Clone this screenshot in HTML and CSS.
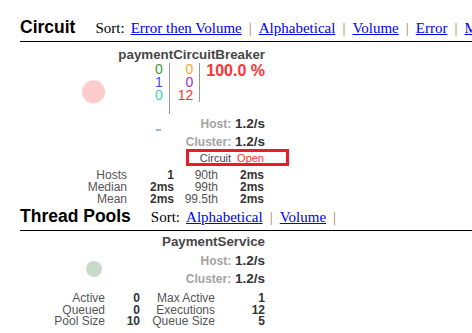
FILE: index.html
```html
<html lang="en">
<head>
    <title>Hystrix Stream: payment</title>
    <link rel="stylesheet" href="styles.css">
</head>
<body>
<div class="section">
    <div class="section-header">
        <h2>Circuit</h2>
        <div class="sort">
            <span>Sort:</span>
            <a href="#">Error then Volume</a><span class="sep">|</span>
            <a href="#">Alphabetical</a><span class="sep">|</span>
            <a href="#">Volume</a><span class="sep">|</span>
            <a href="#">Error</a><span class="sep">|</span>
            <a href="#">Mean</a><span class="sep">|</span>
            <a href="#">Median</a><span class="sep">|</span>
            <a href="#">90</a><span class="sep">|</span>
            <a href="#">99</a><span class="sep">|</span>
            <a href="#">99.5</a>
        </div>
    </div>
    <div class="monitor">
        <!-- health circle and sparkline drawn on the chart canvas -->
        <svg class="chart" width="245" height="160">
            <circle cx="73.5" cy="49.8" r="11.5" fill="#ffcccc"/>
            <rect x="136" y="87" width="5" height="2" fill="#9db7d6"/>
        </svg>
        <p class="name">paymentCircuitBreaker</p>
        <div class="counters">
            <div class="counter-col first">
                <span class="success">0</span>
                <span class="short-circuited">1</span>
                <span class="bad-request">0</span>
            </div>
            <div class="counter-col">
                <span class="timeout">0</span>
                <span class="rejected">0</span>
                <span class="failure">12</span>
            </div>
            <div class="error-rate">100.0 %</div>
        </div>
        <div class="rates">
            <div class="rate"><span class="rate-label">Host:</span> <span>1.2/s</span></div>
            <div class="rate"><span class="rate-label">Cluster:</span> <span>1.2/s</span></div>
        </div>
        <div class="status">
            Circuit <span class="open">Open</span>
            <span class="highlight"></span>
        </div>
        <div class="stats latency">
            <span class="label">Hosts</span><span class="value">1</span>
            <span class="label">90th</span><span class="value">2ms</span>
            <span class="label">Median</span><span class="value">2ms</span>
            <span class="label">99th</span><span class="value">2ms</span>
            <span class="label">Mean</span><span class="value">2ms</span>
            <span class="label">99.5th</span><span class="value">2ms</span>
        </div>
    </div>
</div>
<div class="section">
    <div class="section-header">
        <h2>Thread Pools</h2>
        <div class="sort">
            <span>Sort:</span>
            <a href="#">Alphabetical</a><span class="sep">|</span>
            <a href="#">Volume</a><span class="sep">|</span>
        </div>
    </div>
    <div class="monitor pool-monitor">
        <svg class="chart" width="245" height="80">
            <circle cx="74" cy="38" r="8" fill="#c8dbc9"/>
        </svg>
        <p class="name">PaymentService</p>
        <div class="rates pool-rates">
            <div class="rate"><span class="rate-label">Host:</span> <span>1.2/s</span></div>
            <div class="rate"><span class="rate-label">Cluster:</span> <span>1.2/s</span></div>
        </div>
        <div class="stats pool">
            <span class="label">Active</span><span class="value">0</span>
            <span class="label">Max Active</span><span class="value">1</span>
            <span class="label">Queued</span><span class="value">0</span>
            <span class="label">Executions</span><span class="value">12</span>
            <span class="label">Pool Size</span><span class="value">10</span>
            <span class="label">Queue Size</span><span class="value">5</span>
        </div>
    </div>
</div>
</body>
</html>
```

FILE: styles.css
```css
body {
    margin: 0;
    padding-left: 20px;
    overflow: hidden;
    font-family: "Liberation Sans", Arial, sans-serif;
    background-color: #fff;
    color: #333;
}

.section-header {
    display: flex;
    align-items: baseline;
    padding-bottom: 2px;
    border-bottom: 1px solid #000;
    white-space: nowrap;
}

.section:first-child .section-header {
    margin-top: 16px;
}

.section-header h2 {
    margin: 0 20px 0 0;
    font-size: 17.5px;
    line-height: 22px;
    font-weight: bold;
    color: #000;
}

.sort {
    display: flex;
    gap: 6px;
    font-family: "Liberation Serif", "Times New Roman", serif;
    font-size: 15px;
    line-height: 22px;
    color: #000;
}

.sort a {
    color: #0000ee;
}

.sort .sep {
    color: #a57a45;
    margin: 0 1px;
}

.monitor {
    position: relative;
    width: 245px;
    padding-top: 5px;
}

.pool-monitor {
    padding-top: 3px;
}

.chart {
    position: absolute;
    left: 0;
    top: 0;
}

.name {
    margin: 0;
    text-align: right;
    font-size: 10pt;
    line-height: 16px;
    font-weight: bold;
    color: #474747;
}

.counters {
    display: flex;
    justify-content: flex-end;
    align-items: flex-start;
}

.counter-col {
    display: flex;
    flex-direction: column;
    align-items: flex-end;
    padding: 0 6px 0 8px;
    border-right: 1px solid #999;
    font-size: 14px;
    line-height: 13px;
}

.counter-col.first {
    padding-bottom: 12px;
}

.success { color: #3a9c3a; }
.short-circuited { color: #4646ff; }
.bad-request { color: #35d6a6; }
.timeout { color: #ffa21a; }
.rejected { color: #9430c6; }
.failure { color: #ff3333; }

.error-rate {
    margin-left: 6px;
    font-size: 16px;
    line-height: 16px;
    font-weight: bold;
    color: #ff3333;
}

.rates {
    margin-top: 1px;
    text-align: right;
    font-size: 13.5px;
    line-height: 17px;
    font-weight: bold;
    color: #333;
}

.pool-rates {
    margin-top: 2px;
    line-height: 18px;
}

.rate-label {
    font-size: 12px;
    color: #a3a3a3;
}

.status {
    position: relative;
    text-align: right;
    font-size: 11px;
    line-height: 14px;
    padding: 0 1px 4px 0;
    color: #444;
}

.status .open {
    margin-left: 3px;
    color: #ff3333;
}

/* red box drawn over the status in the screenshot */
.highlight {
    position: absolute;
    left: 166px;
    top: -2px;
    width: 103px;
    height: 17px;
    box-sizing: border-box;
    border: 3px solid #ec1c24;
}

.stats {
    display: grid;
    font-size: 12px;
    line-height: 12px;
    text-align: right;
}

.latency {
    grid-template-columns: 107px 47px 44px 46px;
}

.pool {
    margin-top: 5px;
    line-height: 11.5px;
    grid-template-columns: 85px 35px 75px 50px;
}

.stats .label {
    color: #555;
}

.stats .value {
    font-weight: bold;
    color: #333;
}
```
